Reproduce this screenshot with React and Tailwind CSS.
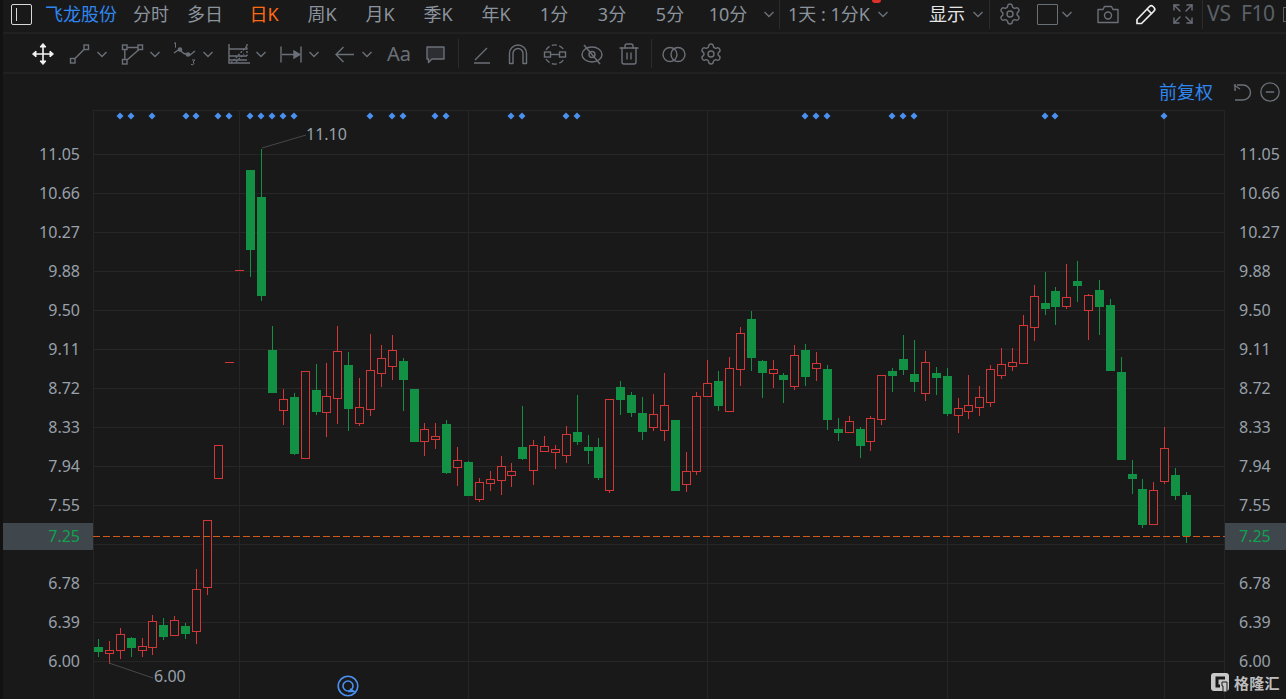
import React from "react";
import { Settings, Expand, CircleMinus, Trash2 } from "lucide-react";

const font = { fontFamily: '"Noto Sans", "Noto Sans CJK SC", sans-serif' };

// type, high, body top, body bottom, low (page pixels)
const candles = [
  ["g", 639, 647, 652, 657], ["r", 641, 650, 653, 664], ["r", 628, 634, 650, 659], ["g", 637, 638, 648, 657],
  ["r", 638, 646, 650, 657], ["r", 615, 621, 647, 655], ["g", 618, 625, 637, 640], ["r", 616, 620, 635, 636],
  ["g", 623, 626, 634, 639], ["r", 569, 589, 631, 644], ["r", 520, 520, 587, 595], ["r", 445, 445, 478, 478],
  ["d", 362, 362, 362, 362], ["d", 270, 270, 270, 270], ["g", 170, 170, 250, 277], ["g", 149, 197, 296, 301],
  ["g", 326, 350, 393, 393], ["r", 389, 399, 410, 425], ["g", 393, 397, 454, 455], ["r", 371, 371, 458, 459],
  ["g", 364, 390, 412, 415], ["r", 363, 396, 412, 437], ["r", 326, 351, 398, 424], ["g", 352, 365, 409, 431],
  ["r", 378, 407, 423, 426], ["r", 334, 370, 409, 416], ["r", 345, 358, 373, 387], ["r", 335, 350, 366, 380],
  ["g", 358, 361, 380, 411], ["g", 389, 389, 442, 442], ["r", 423, 429, 441, 456], ["r", 423, 436, 439, 449],
  ["g", 420, 424, 473, 474], ["r", 447, 460, 467, 486], ["g", 461, 462, 496, 496], ["r", 478, 482, 499, 502],
  ["r", 471, 479, 483, 491], ["r", 456, 466, 480, 495], ["r", 463, 471, 475, 487], ["g", 406, 447, 459, 460],
  ["r", 440, 445, 470, 485], ["r", 436, 446, 451, 452], ["r", 445, 449, 452, 469], ["r", 426, 434, 455, 463],
  ["g", 395, 432, 442, 445], ["g", 435, 447, 451, 464], ["g", 438, 447, 478, 480], ["r", 399, 399, 490, 493],
  ["g", 381, 387, 400, 415], ["g", 392, 395, 413, 417], ["g", 397, 413, 432, 440], ["r", 394, 414, 427, 431],
  ["r", 373, 405, 430, 441], ["g", 420, 420, 491, 491], ["r", 452, 471, 484, 492], ["r", 392, 396, 471, 475],
  ["r", 360, 383, 396, 396], ["g", 371, 381, 406, 411], ["r", 357, 368, 411, 412], ["r", 327, 333, 369, 386],
  ["g", 311, 319, 358, 371], ["g", 360, 361, 373, 398], ["r", 360, 369, 373, 388], ["g", 373, 375, 380, 403],
  ["r", 345, 355, 386, 390], ["g", 344, 350, 377, 386], ["r", 352, 363, 368, 381], ["g", 365, 369, 420, 430],
  ["g", 418, 429, 433, 441], ["r", 416, 421, 432, 433], ["g", 427, 429, 446, 458], ["r", 416, 418, 441, 451],
  ["r", 375, 375, 419, 425], ["g", 368, 371, 376, 392], ["g", 335, 359, 370, 375], ["g", 340, 374, 382, 392],
  ["r", 351, 362, 393, 401], ["g", 367, 373, 378, 395], ["g", 368, 376, 414, 416], ["r", 398, 408, 415, 433],
  ["r", 375, 405, 411, 419], ["r", 386, 397, 407, 416], ["r", 365, 369, 402, 407], ["r", 348, 364, 375, 379],
  ["r", 348, 362, 366, 371], ["r", 315, 325, 363, 363], ["r", 285, 296, 327, 341], ["g", 272, 303, 309, 315],
  ["g", 287, 291, 307, 325], ["r", 264, 297, 306, 309], ["g", 261, 281, 286, 302], ["r", 294, 295, 310, 340],
  ["g", 280, 290, 307, 335], ["g", 299, 305, 371, 371], ["g", 357, 372, 460, 460], ["g", 460, 474, 479, 494],
  ["g", 479, 489, 525, 528], ["r", 482, 490, 524, 524], ["r", 427, 448, 481, 484], ["g", 468, 475, 496, 500],
  ["g", 492, 495, 536, 543],
];

const gridY = [154, 193, 232, 271, 310, 349, 388, 427, 466, 505, 544, 583, 622, 661];
const gridX = [239, 468, 707, 947, 1164];
const marks = [120, 131, 152, 186, 196, 218, 229, 250, 261, 272, 283, 294, 370, 392, 403, 435, 446, 511, 522, 566, 577, 805, 816, 827, 892, 903, 914, 1045, 1055, 1164];
const axisRows = ["11.05", "10.66", "10.27", "9.88", "9.50", "9.11", "8.72", "8.33", "7.94", "7.55", "", "6.78", "6.39", "6.00"];
const periods = ["日K", "周K", "月K", "季K", "年K", "1分", "3分", "5分", "10分"];

function Chev({ className = "text-[#6b7078]" }) {
  return (
    <svg width="12" height="24" viewBox="0 0 12 24" fill="none" stroke="currentColor" strokeWidth="1.4" className={className}>
      <path d="M1.5 10l4.5 4.5 4.5-4.5" />
    </svg>
  );
}

function Ico({ children }) {
  return (
    <svg width="24" height="24" viewBox="0 0 24 24" fill="none" stroke="#6b7078" strokeWidth="1.4" className="shrink-0">
      {children}
    </svg>
  );
}

function Group({ children }) {
  return (
    <div className="flex items-center gap-[5px] ml-3">
      <Ico>{children}</Ico>
      <Chev />
    </div>
  );
}

function Candle({ c, i }) {
  const [type, high, top, bottom, low] = c;
  const x = Math.round(98 + 10.88 * i);
  const color = type === "g" ? "#129145" : "#d23636";
  if (type === "d") return <rect x={x - 4} y={high} width="9" height="1" fill={color} />;
  return (
    <g>
      {high < top && <rect x={x} y={high} width="1" height={top - high} fill={color} />}
      {low > bottom && <rect x={x} y={bottom} width="1" height={low - bottom} fill={color} />}
      {type === "g" ? (
        <rect x={x - 4} y={top} width="9" height={bottom - top} fill={color} />
      ) : (
        <rect x={x - 3.5} y={top + 0.5} width="8" height={bottom - top} fill="#191919" stroke={color} />
      )}
    </g>
  );
}

function Logo() {
  return (
    <div className="absolute left-[1208px] top-[673px] flex items-center gap-[5px]">
      <svg width="18" height="19" viewBox="0 0 18 19">
        <rect x="0" y="0" width="18" height="18" rx="3" fill="#c8c8c8" />
        <path d="M14 5H6v8h3" fill="none" stroke="#191919" strokeWidth="3" />
        <path d="M11 9h5v10h-4v-6h-1z" fill="#c8c8c8" stroke="#191919" strokeWidth="1" />
      </svg>
      <span className="text-[15px] leading-[18px] font-bold text-[#bdbdbd] tracking-[0.3px]">格隆汇</span>
    </div>
  );
}

export default function App() {
  return (
    <div className="relative w-[1286px] h-[699px] overflow-hidden bg-[#191919] border-l-[3px] border-[#121212]" style={font}>
      {/* top bar */}
      <div className="flex items-center h-[34px] pb-[4px] border-b-2 border-[#212121] -ml-[3px] text-[18px] text-[#8b939d] whitespace-nowrap *:shrink-0">
        <div className="ml-[11px] w-[21px] h-[21px] border-[1.5px] border-[#d8d8d8] rounded-[2px] flex items-center pl-[4px]">
          <div className="w-[1px] h-[13px] bg-[#d8d8d8]" />
        </div>
        <span className="ml-[13px] text-[#2f86f0] w-[72px]">飞龙股份</span>
        <span className="ml-[16px] w-[36px]">分时</span>
        <span className="ml-[18px] w-[36px]">多日</span>
        <div className="flex ml-[12px]">
          {periods.map((p, i) => (
            <span key={p} className={i === 0 ? "w-[58px] text-center text-[#ff6a13]" : "w-[58px] text-center"}>{p}</span>
          ))}
        </div>
        <div className="ml-[6px]"><Chev /></div>
        <div className="ml-[4px] h-[29px] w-[1px] bg-[#2b2b2b]" />
        <span className="ml-[8px] w-[82px]">1天 : 1分K</span>
        <div className="ml-[7px]"><Chev /></div>
        <span className="ml-[40px] w-[36px] text-[#e6e6e6]">显示</span>
        <div className="ml-[7px]"><Chev /></div>
        <div className="ml-[5px] h-[29px] w-[1px] bg-[#2b2b2b]" />
        <div className="ml-[8px]"><Settings size={24} strokeWidth={1.4} className="text-[#6b7078]" /></div>
        <div className="ml-[15px] w-[21px] h-[21px] border-[1.5px] border-[#6b7078] rounded-[1px]" />
        <div className="ml-[3px]"><Chev /></div>
        <div className="ml-[23px]">
          <Ico>
            <path d="M2 7.5h5l1.5-3h7l1.5 3h5v13H2z" strokeLinejoin="round" />
            <circle cx="12" cy="13.5" r="3.5" />
          </Ico>
        </div>
        <div className="ml-[14px]">
          <svg width="24" height="24" viewBox="0 0 24 24" fill="none" stroke="#ececec" strokeWidth="1.7" strokeLinejoin="round">
            <path d="M3 17.5L15.5 4.5a2.5 2.5 0 0 1 3.5 0l1 1a2.5 2.5 0 0 1 0 3.5L7.5 21.5H3z" />
            <path d="M13 7l5 5" />
          </svg>
        </div>
        <div className="ml-[13px]"><Expand size={24} strokeWidth={1.4} className="text-[#6b7078]" /></div>
        <div className="ml-[7px] h-[29px] w-[1px] bg-[#2b2b2b]" />
        <span className="ml-[4px] w-[25px] text-[#5b6067] text-[21px]">VS</span>
        <span className="ml-[9px] w-[32px] text-[#5b6067] text-[21px] tracking-[-0.5px]">F10</span>
        <div className="ml-[10px] w-[8px] h-[15px] border-[1.5px] border-[#5b6067]" />
      </div>

      {/* drawing tools */}
      <div className="flex items-center h-[40px] border-b-2 border-[#212121] -ml-[3px] pl-[31px] pt-[1px]">
        <svg width="24" height="24" viewBox="0 0 24 24" fill="#f4f4f4" stroke="#f4f4f4" strokeWidth="1.6">
          <path d="M12 3v18M3 12h18" fill="none" />
          <path d="M12 1.5l3 3.5H9zM12 22.5l-3-3.5h6zM1.5 12L5 9v6zM22.5 12L19 15V9z" strokeWidth="1" />
        </svg>
        <Group>
          <rect x="3.5" y="16.5" width="4.5" height="4.5" />
          <rect x="17" y="3" width="4.5" height="4.5" />
          <path d="M8 16.5L17 7.5" />
        </Group>
        <Group>
          <rect x="2.5" y="3" width="4.5" height="4.5" />
          <rect x="18" y="3" width="4.5" height="4.5" />
          <rect x="2.5" y="17.5" width="4.5" height="4.5" />
          <path d="M7 5.5h11M4.8 7.5v10M19 7.5L7 18" />
        </Group>
        <Group>
          <path d="M1 11l5-3.5 5 4 6 1.5 5-4" />
          <circle cx="7" cy="7.5" r="1.6" fill="#6b7078" />
          <circle cx="15" cy="12.5" r="1.6" fill="#6b7078" />
          <path d="M1 1.5l1.5-.8v5M19 18h3l-2 2a1.5 1.5 0 1 1-2 2" strokeWidth="1" />
        </Group>
        <Group>
          <path d="M3 2v19h21M3 7h18M3 14h18M3 18h18" />
          <path d="M21 2v12M5 21L21 4M10 20l8-8" strokeDasharray="2 1.5" />
        </Group>
        <Group>
          <path d="M2 4.5v16M22 4.5v16M3 12.5h15" />
          <path d="M15 9l6 3.5-6 3.5z" fill="#6b7078" />
        </Group>
        <Group>
          <path d="M22 12.5H4M11.5 5l-7.5 7.5 7.5 7.5" />
        </Group>
        <span className="ml-[14px] w-[24px] text-center text-[20px] text-[#6b7078]">Aa</span>
        <div className="ml-[12px]">
          <Ico>
            <path d="M4 5h17v12H9l-3.5 3.5V17H4z" strokeLinejoin="round" fill="#2c2e32" />
          </Ico>
        </div>
        <div className="ml-[11px] h-[29px] w-[1px] bg-[#2b2b2b]" />
        <div className="ml-[10px]">
          <Ico>
            <path d="M5 21h16M6 18L18 6" />
          </Ico>
        </div>
        <div className="ml-[13px]">
          <Ico>
            <path d="M3.5 21.5v-10a8.5 8.5 0 0 1 17 0v10h-3.5v-10a5 5 0 0 0-10 0v10z" strokeLinejoin="round" />
          </Ico>
        </div>
        <div className="ml-[13px]">
          <Ico>
            <path d="M3 8a10.5 10.5 0 0 1 18 0M3 17a10.5 10.5 0 0 0 18 0" strokeDasharray="5 2.5" />
            <rect x="1.5" y="10" width="6" height="5" />
            <rect x="16.5" y="10" width="6" height="5" />
            <path d="M7.5 12.5h9" />
          </Ico>
        </div>
        <div className="ml-[13px]">
          <Ico>
            <ellipse cx="12" cy="12.5" rx="10" ry="7.5" />
            <circle cx="12" cy="12.5" r="3" />
            <path d="M4 3l16 19" />
          </Ico>
        </div>
        <div className="ml-[13px]">
          <Trash2 size={24} strokeWidth={1.4} className="text-[#6b7078]" />
        </div>
        <div className="ml-[10px] h-[29px] w-[1px] bg-[#2b2b2b]" />
        <div className="ml-[10px]">
          <Ico>
            <circle cx="8" cy="12.5" r="7" />
            <circle cx="16" cy="12.5" r="7" />
          </Ico>
        </div>
        <div className="ml-[13px]"><Settings size={24} strokeWidth={1.4} className="text-[#6b7078]" /></div>
      </div>

      {/* chart header */}
      <div className="flex items-center justify-end h-[36px] pr-[5px]">
        <span className="text-[18px] text-[#2f86f0] mr-[17px]">前复权</span>
        <div className="mr-[5px]">
          <svg width="24" height="24" viewBox="0 0 24 24" fill="none" stroke="#6b7078" strokeWidth="1.4">
            <path d="M5 4v6h1M4 5l6 4M7 5h6a7.5 7.5 0 0 1 0 15H5" />
          </svg>
        </div>
        <CircleMinus size={22} strokeWidth={1.4} className="text-[#6b7078]" />
      </div>

      {/* chart */}
      <div className="flex h-[589px]">
        <div className="relative w-[90px] shrink-0 pt-[25px] pr-[13px] text-right text-[16px] text-[#98a0aa]">
          {axisRows.map((v, i) => (
            <div key={i} className="h-[39px] leading-[39px]">{v}</div>
          ))}
          <div className="absolute left-0 top-[413px] w-[90px] h-[27px] bg-[#3f464c] leading-[27px] pr-[13px] text-[#12a150]">7.25</div>
        </div>
        <div className="relative w-[1132px] shrink-0">
          <svg width="1132" height="589" viewBox="93 110 1132 589" shapeRendering="crispEdges" className="block">
            <path d="M93.5 110V699M1224.5 110V699M93 110.5H1225" stroke="#252525" />
            {gridY.map((y) => (
              <rect key={y} x="93" y={y} width="1132" height="1" fill="#262626" />
            ))}
            {gridX.map((x) => (
              <rect key={x} x={x} y="110" width="1" height="589" fill="#262626" />
            ))}
            {candles.map((c, i) => (
              <Candle key={i} c={c} i={i} />
            ))}
            <path d="M93 536.5H1225" stroke="#d2581a" strokeDasharray="7 3" />
            {marks.map((x, i) => (
              <path key={i} d={`M${x} 112.5l3.5 3.5-3.5 3.5-3.5-3.5z`} fill="#4a90f0" shapeRendering="auto" />
            ))}
            <path d="M262 148L306 135M109 663L153 678" stroke="#484848" fill="none" shapeRendering="auto" />
          </svg>
          <span className="absolute left-[213px] top-[12px] text-[16px] text-[#98a0aa]">11.10</span>
          <span className="absolute left-[61px] top-[554px] text-[16px] text-[#98a0aa]">6.00</span>
          <svg width="24" height="24" viewBox="0 0 24 24" fill="none" stroke="#4a90f0" strokeWidth="1.6" className="absolute left-[243px] top-[564px]">
            <circle cx="12" cy="12" r="9.8" />
            <circle cx="12" cy="12" r="5" />
            <path d="M14 15l4 2.5h-6" />
          </svg>
        </div>
        <div className="relative w-[61px] shrink-0 pt-[25px] pl-[14px] text-[16px] text-[#98a0aa]">
          {axisRows.map((v, i) => (
            <div key={i} className="h-[39px] leading-[39px]">{v}</div>
          ))}
          <div className="absolute left-0 top-[413px] w-[61px] h-[27px] bg-[#3f464c] leading-[27px] pl-[14px] text-[#12a150]">7.25</div>
        </div>
      </div>

      <Logo />
      <div className="absolute left-[869px] -top-[3px] w-[9px] h-[6px] rounded-full bg-[#e0302a]" />
    </div>
  );
}
